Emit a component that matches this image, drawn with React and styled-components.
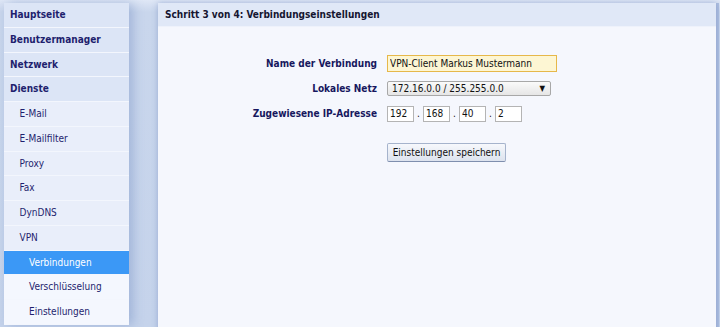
import React from 'react';
import styled, { createGlobalStyle } from 'styled-components';

const Global = createGlobalStyle`
  html, body { margin:0; padding:0; }
  body {
    background: linear-gradient(#dfe7f6 0px, #c9d6ec 12px, #c5d3eb 100%);
    font-family: "DejaVu Sans Condensed", "DejaVu Sans", Verdana, sans-serif;
    font-stretch: condensed;
    font-size: 10px;
    height: 327px;
    overflow: hidden;
  }
  input, button {
    font-family: "DejaVu Sans Condensed", "DejaVu Sans", Verdana, sans-serif;
    font-stretch: condensed;
    font-size: 10px;
  }
`;

const menu = [
  { label: 'Hauptseite', level: 0 },
  { label: 'Benutzermanager', level: 0 },
  { label: 'Netzwerk', level: 0 },
  { label: 'Dienste', level: 0 },
  { label: 'E-Mail', level: 1 },
  { label: 'E-Mailfilter', level: 1 },
  { label: 'Proxy', level: 1 },
  { label: 'Fax', level: 1 },
  { label: 'DynDNS', level: 1 },
  { label: 'VPN', level: 1 },
  { label: 'Verbindungen', level: 2, active: true },
  { label: 'Verschlüsselung', level: 2 },
  { label: 'Einstellungen', level: 2 },
];

const App = () => {
  return (
    <>
      <Global />
      <Page>
        <Sidebar>
          {menu.map((m) => (
            <MenuItem key={m.label} $level={m.level} $active={m.active}>
              {m.label}
            </MenuItem>
          ))}
        </Sidebar>
        <Panel>
          <PanelHead>Schritt 3 von 4: Verbindungseinstellungen</PanelHead>
          <PanelBody>
            <Form>
              <Label>Name der Verbindung</Label>
              <div>
                <NameInput defaultValue="VPN-Client Markus Mustermann" />
              </div>
              <Label>Lokales Netz</Label>
              <div>
                <Select>
                  <span>172.16.0.0 / 255.255.0.0</span>
                  <Arrow>▼</Arrow>
                </Select>
              </div>
              <Label>Zugewiesene IP-Adresse</Label>
              <IpRow>
                <IpBox defaultValue="192" />
                <Dot>.</Dot>
                <IpBox defaultValue="168" />
                <Dot>.</Dot>
                <IpBox defaultValue="40" />
                <Dot>.</Dot>
                <IpBox defaultValue="2" />
              </IpRow>
              <ButtonCell>
                <SaveButton type="button">Einstellungen speichern</SaveButton>
              </ButtonCell>
            </Form>
          </PanelBody>
        </Panel>
      </Page>
    </>
  );
};

export default App;

const Page = styled.div`
  display: flex;
  align-items: flex-start;
  padding: 3px 0 0 4px;
  gap: 29px;
`;

const Sidebar = styled.div`
  width: 125px;
  flex-shrink: 0;
  box-shadow: 4px 0 10px rgba(90, 120, 180, 0.35);
`;

const MenuItem = styled.div`
  height: 23.75px;
  line-height: 23.75px;
  border-bottom: 1px solid #f3f6fd;
  padding-left: ${(p) => 6 + p.$level * 9.5}px;
  font-weight: ${(p) => (p.$level === 0 ? 'bold' : 'normal')};
  color: ${(p) => (p.$active ? '#ffffff' : '#1f1f6e')};
  background: ${(p) =>
    p.$active ? '#3b98f6' : p.$level === 0 ? '#dce5f6' : p.$level === 1 ? '#e9eefa' : '#f4f7fe'};
  white-space: nowrap;
`;

const Panel = styled.div`
  width: 558px;
  height: 330px;
  background: #f5f7fd;
  box-shadow: 0 0 6px rgba(90, 120, 180, 0.45), 3px 0 0 #aebfe0;
`;

const PanelHead = styled.div`
  height: 23px;
  line-height: 23px;
  padding-left: 7px;
  background: #e0e8f7;
  border-bottom: 1px solid #eef2fb;
  font-weight: bold;
  color: #151530;
`;

const PanelBody = styled.div`
  padding-top: 24px;
`;

const Form = styled.div`
  display: grid;
  grid-template-columns: 219px auto;
  grid-template-rows: repeat(3, 25px) auto;
  column-gap: 10px;
  align-items: center;
`;

const Label = styled.div`
  text-align: right;
  font-weight: bold;
  color: #17175e;
`;

const NameInput = styled.input`
  box-sizing: border-box;
  width: 170px;
  height: 17px;
  padding: 0 2px;
  border: 1px solid #e6b84a;
  background: #fdf6d3;
  color: #111;
  outline: none;
`;

const Select = styled.div`
  box-sizing: border-box;
  width: 164px;
  height: 15px;
  display: flex;
  align-items: center;
  justify-content: space-between;
  padding: 0 5px 0 4px;
  border: 1px solid #a8a8a8;
  border-radius: 2px;
  background: linear-gradient(#fafafa, #e6e6e6);
  color: #111;
`;

const Arrow = styled.span`
  font-size: 8px;
  color: #111;
`;

const IpRow = styled.div`
  display: flex;
  align-items: center;
`;

const IpBox = styled.input`
  box-sizing: border-box;
  width: 27px;
  height: 16px;
  padding: 0 2px;
  border: 1px solid #b4b4b4;
  background: #fff;
  color: #111;
  outline: none;
`;

const Dot = styled.span`
  width: 9px;
  text-align: center;
  color: #111;
`;

const ButtonCell = styled.div`
  grid-column: 2;
  padding-top: 17px;
`;

const SaveButton = styled.button`
  height: 19px;
  width: 119px;
  padding: 0;
  color: #111;
  border: 1px solid #a5b3cc;
  border-bottom-color: #7f8fae;
  border-radius: 2px;
  background: linear-gradient(#f6f8fc, #dde3ee);
`;
